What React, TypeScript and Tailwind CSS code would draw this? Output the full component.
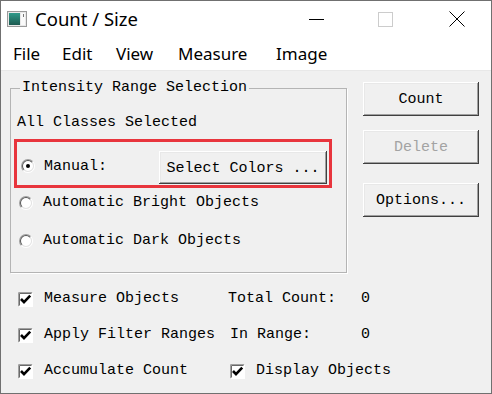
import React from "react";

const mono = "font-['Liberation_Mono',monospace] text-[15px] leading-[18px]";

const Radio = ({ checked, className }: { checked?: boolean; className?: string }) => (
  <svg width="14" height="14" viewBox="0 0 14 14" className={`shrink-0 ${className ?? ""}`}>
    <circle cx="7" cy="7" r="5.5" fill="#fff" />
    <circle cx="7" cy="7" r="6.5" fill="none" stroke="#a0a0a0" strokeWidth="1" strokeDasharray="20.42 20.42" transform="rotate(135 7 7)" />
    <circle cx="7" cy="7" r="6.5" fill="none" stroke="#ffffff" strokeWidth="1" strokeDasharray="20.42 20.42" transform="rotate(-45 7 7)" />
    <circle cx="7" cy="7" r="5.5" fill="none" stroke="#555" strokeWidth="1" strokeDasharray="17.28 17.28" transform="rotate(135 7 7)" />
    <circle cx="7" cy="7" r="5.5" fill="none" stroke="#e3e3e3" strokeWidth="1" strokeDasharray="17.28 17.28" transform="rotate(-45 7 7)" />
    {checked && <circle cx="7" cy="7" r="2" fill="#000" />}
  </svg>
);

const Check = () => (
  <svg width="15" height="15" viewBox="0 0 15 15" className="shrink-0">
    <rect x="0" y="0" width="15" height="15" fill="#fff" />
    <path d="M0.5 14.5V0.5H14.5" fill="none" stroke="#a0a0a0" />
    <path d="M1.5 13.5V1.5H13.5" fill="none" stroke="#696969" />
    <path d="M0.5 14.5H14.5V0.5" fill="none" stroke="#fff" />
    <path d="M3 7l3 3.2 6.2-6.5" fill="none" stroke="#000" strokeWidth="2.6" />
  </svg>
);

const Btn = ({ label, disabled, className }: { label: string; disabled?: boolean; className?: string }) => (
  <div
    className={`flex items-center justify-center pt-[2px] bg-[#f0f0f0] ${mono} shadow-[inset_-1px_-1px_#404040,inset_1px_1px_#ffffff,inset_-2px_-2px_#a0a0a0,inset_2px_2px_#e8e8e8] ${disabled ? "text-[#a3a3a3]" : "text-black"} ${className ?? ""}`}
  >
    {label}
  </div>
);

export default function App() {
  return (
    <div className="w-[492px] h-[394px] border border-[#707070] bg-[#f0f0f0] flex flex-col overflow-hidden text-black">
      {/* title bar */}
      <div className="h-[36px] bg-white flex items-center shrink-0">
        <svg width="20" height="16" viewBox="0 0 20 16" className="ml-[6px]">
          <defs>
            <linearGradient id="ic" x1="0" y1="0" x2="0" y2="1">
              <stop offset="0" stopColor="#2f9a8a" />
              <stop offset="1" stopColor="#1d5a50" />
            </linearGradient>
          </defs>
          <rect x="0.5" y="0.5" width="19" height="15" fill="#e8e8e8" stroke="#9a9a9a" />
          <rect x="2" y="2" width="11" height="12" fill="url(#ic)" />
          <rect x="14" y="2" width="4" height="12" fill="#fafafa" />
          <rect x="16" y="3" width="1" height="3" fill="#777" />
        </svg>
        <span className="ml-[8px] font-['Noto_Sans',sans-serif] text-[18.5px] leading-none">Count / Size</span>
        <div className="ml-auto flex items-center h-full">
          <svg width="16" height="16" viewBox="0 0 16 16" className="mr-[54px]">
            <path d="M1 8.5H16" stroke="#000" strokeWidth="1" />
          </svg>
          <svg width="15" height="15" viewBox="0 0 15 15" className="mr-[56px]">
            <rect x="0.5" y="0.5" width="14" height="14" fill="none" stroke="#cccccc" />
          </svg>
          <svg width="16" height="16" viewBox="0 0 16 16" className="mr-[26px]">
            <path d="M0.5 0.5L15.5 15.5M15.5 0.5L0.5 15.5" stroke="#000" strokeWidth="1" />
          </svg>
        </div>
      </div>

      {/* menu bar */}
      <div className="h-[34px] bg-white flex items-center shrink-0 font-['Noto_Sans',sans-serif] text-[17px] border-b border-[#e8e8e8]">
        <span className="pl-[12px] w-[61px]">File</span>
        <span className="w-[54px]">Edit</span>
        <span className="w-[62px]">View</span>
        <span className="w-[98px]">Measure</span>
        <span>Image</span>
      </div>

      {/* top section */}
      <div className="flex pl-[9px]">
        <fieldset className="mt-[8px] w-[337px] h-[194px] border border-[#b4b4b4] shadow-[1px_1px_#ffffff]">
          <legend className={`ml-[9px] px-[2px] ${mono}`}>Intensity Range Selection</legend>
          <div className={`mt-[15px] pl-[6px] h-[22px] flex items-center ${mono}`}>All Classes Selected</div>
          <div className="mt-[5px] ml-[3px] w-[318px] h-[49px] border-[3px] border-[#e8353d] flex items-center pl-[4px] pr-[2px]">
            <Radio checked className="mt-[4px]" />
            <span className={`ml-[9px] mt-[6px] ${mono}`}>Manual:</span>
            <Btn label="Select Colors ..." className="ml-auto mt-[8px] w-[168px] h-[33px]" />
          </div>
          <div className={`mt-[4px] pl-[8px] h-[22px] flex items-center ${mono}`}>
            <Radio />
            <span className="ml-[10px]">Automatic Bright Objects</span>
          </div>
          <div className={`mt-[16px] pl-[8px] h-[22px] flex items-center ${mono}`}>
            <Radio />
            <span className="ml-[10px]">Automatic Dark Objects</span>
          </div>
        </fieldset>

        <div className="ml-[16px] mt-[11px] w-[116px] flex flex-col">
          <Btn label="Count" className="h-[34px]" />
          <Btn label="Delete" disabled className="mt-[14px] h-[34px]" />
          <Btn label="Options..." className="mt-[19px] h-[34px]" />
        </div>
      </div>

      {/* bottom section */}
      <div className={`mt-[15px] pl-[17px] grid grid-cols-[210px_133px_auto] gap-y-[14px] ${mono}`}>
        <div className="h-[22px] flex items-center">
          <Check />
          <span className="ml-[11px]">Measure Objects</span>
        </div>
        <div className="h-[22px] flex items-center">Total Count:</div>
        <div className="h-[22px] flex items-center">0</div>

        <div className="h-[22px] flex items-center">
          <Check />
          <span className="ml-[11px]">Apply Filter Ranges</span>
        </div>
        <div className="h-[22px] flex items-center pl-[2px]">In Range:</div>
        <div className="h-[22px] flex items-center">0</div>

        <div className="h-[22px] flex items-center">
          <Check />
          <span className="ml-[11px]">Accumulate Count</span>
        </div>
        <div className="col-span-2 h-[22px] flex items-center pl-[2px]">
          <Check />
          <span className="ml-[11px]">Display Objects</span>
        </div>
      </div>
    </div>
  );
}
